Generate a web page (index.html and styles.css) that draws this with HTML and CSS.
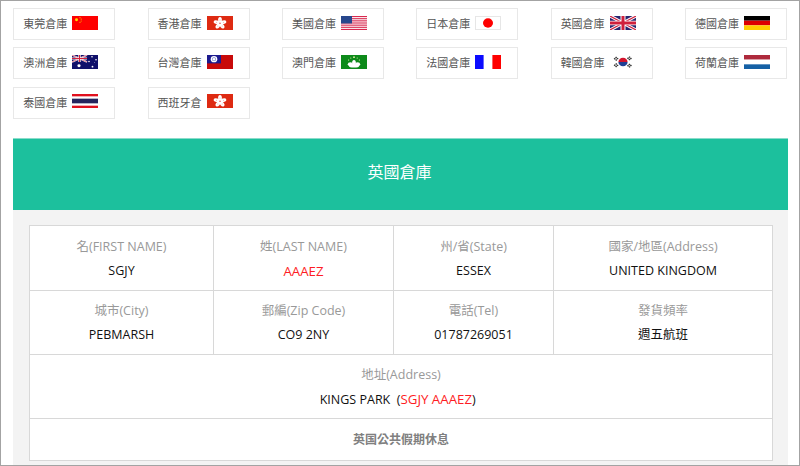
FILE: index.html
```html
<!DOCTYPE html>
<html lang="zh-Hant">
<head>
<meta charset="utf-8">
<title>英國倉庫</title>
<link rel="stylesheet" href="styles.css">
</head>
<body>
<div class="frame">
  <ul class="tiles">
    <li class="tile"><span>東莞倉庫</span>
      <svg class="flag" viewBox="0 0 26 15" preserveAspectRatio="none"><rect width="26" height="15" fill="#fe0000"/><circle cx="4.5" cy="4" r="1.5" fill="#ffde00"/><g fill="#f5b800"><circle cx="8" cy="1.8" r=".6"/><circle cx="9.2" cy="3.3" r=".6"/><circle cx="9.2" cy="5.3" r=".6"/><circle cx="8" cy="6.8" r=".6"/></g></svg></li>
    <li class="tile"><span>香港倉庫</span>
      <svg class="flag" viewBox="0 0 26 15" preserveAspectRatio="none"><rect width="26" height="15" fill="#de2a12"/><g fill="#fff"><ellipse cx="13" cy="4.4" rx="1.9" ry="3.2"/><ellipse cx="13" cy="4.4" rx="1.9" ry="3.2" transform="rotate(72 13 7.8)"/><ellipse cx="13" cy="4.4" rx="1.9" ry="3.2" transform="rotate(144 13 7.8)"/><ellipse cx="13" cy="4.4" rx="1.9" ry="3.2" transform="rotate(216 13 7.8)"/><ellipse cx="13" cy="4.4" rx="1.9" ry="3.2" transform="rotate(288 13 7.8)"/></g><g fill="#e77"><circle cx="13" cy="7.8" r=".9"/><circle cx="13" cy="4.2" r=".5"/><circle cx="16.4" cy="6.7" r=".5"/><circle cx="9.6" cy="6.7" r=".5"/><circle cx="15.1" cy="10.7" r=".5"/><circle cx="10.9" cy="10.7" r=".5"/></g></svg></li>
    <li class="tile"><span>美國倉庫</span>
      <svg class="flag" viewBox="0 0 26 15" preserveAspectRatio="none"><rect width="26" height="15" fill="#fff"/><g fill="#d8294f"><rect width="26" height="1.2"/><rect y="2.3" width="26" height="1.2"/><rect y="4.6" width="26" height="1.2"/><rect y="6.9" width="26" height="1.2"/><rect y="9.2" width="26" height="1.2"/><rect y="11.5" width="26" height="1.2"/><rect y="13.8" width="26" height="1.2"/></g><rect width="11" height="8" fill="#27478c"/></svg></li>
    <li class="tile"><span>日本倉庫</span>
      <svg class="flag" viewBox="0 0 26 15" preserveAspectRatio="none"><rect x=".5" y=".5" width="25" height="14" fill="#fff" stroke="#e6e6e6"/><circle cx="13" cy="7.5" r="5" fill="#fe0000"/></svg></li>
    <li class="tile"><span>英國倉庫</span>
      <svg class="flag" viewBox="0 0 26 15" preserveAspectRatio="none"><rect width="26" height="15" fill="#28256e"/><path d="M0 0L26 15M26 0L0 15" stroke="#fff" stroke-width="3.4"/><path d="M0 0L26 15M26 0L0 15" stroke="#d0203c" stroke-width="1.2"/><path d="M13 0V15M0 7.5H26" stroke="#fff" stroke-width="5"/><path d="M13 0V15M0 7.5H26" stroke="#d0203c" stroke-width="3"/></svg></li>
    <li class="tile"><span>德國倉庫</span>
      <svg class="flag" viewBox="0 0 26 15" preserveAspectRatio="none"><rect width="26" height="5" fill="#000"/><rect y="5" width="26" height="5" fill="#dd0000"/><rect y="10" width="26" height="5" fill="#ffce00"/></svg></li>

    <li class="tile"><span>澳洲倉庫</span>
      <svg class="flag" viewBox="0 0 26 15" preserveAspectRatio="none"><rect width="26" height="15" fill="#10106a"/><path d="M0 0L15 7.5M15 0L0 7.5" stroke="#fff" stroke-width="1.6"/><path d="M0 0L15 7.5M15 0L0 7.5" stroke="#d0203c" stroke-width=".6"/><path d="M7.5 0V7.5M0 3.75H15" stroke="#fff" stroke-width="2.4"/><path d="M7.5 0V7.5M0 3.75H15" stroke="#d0203c" stroke-width="1.2"/><g fill="#fff"><circle cx="7" cy="11.5" r="1.6"/><circle cx="20" cy="2" r=".8"/><circle cx="24" cy="5" r=".8"/><circle cx="17" cy="7" r=".8"/><circle cx="20.5" cy="12.5" r=".9"/><circle cx="22.5" cy="8" r=".4"/></g></svg></li>
    <li class="tile"><span>台灣倉庫</span>
      <svg class="flag" viewBox="0 0 26 15" preserveAspectRatio="none"><rect width="26" height="15" fill="#c80a0a"/><rect width="14" height="9" fill="#1b1a8e"/><circle cx="7" cy="4.5" r="3.3" fill="#fff"/><circle cx="7" cy="4.5" r="2" fill="#6f79c9"/><circle cx="7" cy="4.5" r="1.3" fill="#fff"/></svg></li>
    <li class="tile"><span>澳門倉庫</span>
      <svg class="flag" viewBox="0 0 26 15" preserveAspectRatio="none"><rect width="26" height="15" fill="#0d8a1a"/><g fill="#fff"><ellipse cx="13" cy="12" rx="5" ry="1.5"/><ellipse cx="13" cy="8.6" rx="1.9" ry="3.2"/><ellipse cx="9.4" cy="10" rx="2.6" ry="2.2"/><ellipse cx="16.6" cy="10" rx="2.6" ry="2.2"/></g><g fill="#eef2b0"><circle cx="13" cy="2.3" r=".9"/><circle cx="9.8" cy="3.2" r=".6"/><circle cx="16.2" cy="3.2" r=".6"/><circle cx="7.6" cy="5.4" r=".6"/><circle cx="18.4" cy="5.4" r=".6"/></g></svg></li>
    <li class="tile"><span>法國倉庫</span>
      <svg class="flag" viewBox="0 0 26 15" preserveAspectRatio="none"><rect width="8.6" height="15" fill="#0b0bff"/><rect x="17.4" width="8.6" height="15" fill="#fe0000"/></svg></li>
    <li class="tile"><span>韓國倉庫</span>
      <svg class="flag" viewBox="0 0 26 15" preserveAspectRatio="none"><rect width="26" height="15" fill="#fff"/><path d="M8.4 7.5a4.6 4.6 0 0 1 9.2 0Z" fill="#d2132c"/><path d="M8.4 7.5a4.6 4.6 0 0 0 9.2 0Z" fill="#1f3f94"/><g stroke="#333" stroke-width="1.5" stroke-dasharray="1.4 .6"><path d="M4.2 4.6L7 1.8M5.7 5.8L8.5 3"/><path d="M17.5 3L20.3 5.8M19 1.8L21.8 4.6"/><path d="M4.2 10.4L7 13.2M5.7 9.2L8.5 12"/><path d="M17.5 12L20.3 9.2M19 13.2L21.8 10.4"/></g></svg></li>
    <li class="tile"><span>荷蘭倉庫</span>
      <svg class="flag" viewBox="0 0 26 15" preserveAspectRatio="none"><rect width="26" height="5" fill="#ae2a3c"/><rect y="5" width="26" height="5" fill="#fff"/><rect y="10" width="26" height="5" fill="#1560a5"/></svg></li>

    <li class="tile"><span>泰國倉庫</span>
      <svg class="flag" viewBox="0 0 26 15" preserveAspectRatio="none"><rect width="26" height="15" fill="#fff"/><rect width="26" height="2.5" fill="#e0101e"/><rect y="5" width="26" height="5" fill="#25255e"/><rect y="12.5" width="26" height="2.5" fill="#e0101e"/></svg></li>
    <li class="tile"><span>西班牙倉</span>
      <svg class="flag" viewBox="0 0 26 15" preserveAspectRatio="none"><rect width="26" height="15" fill="#de2a12"/><g fill="#fff"><ellipse cx="13" cy="4.4" rx="1.9" ry="3.2"/><ellipse cx="13" cy="4.4" rx="1.9" ry="3.2" transform="rotate(72 13 7.8)"/><ellipse cx="13" cy="4.4" rx="1.9" ry="3.2" transform="rotate(144 13 7.8)"/><ellipse cx="13" cy="4.4" rx="1.9" ry="3.2" transform="rotate(216 13 7.8)"/><ellipse cx="13" cy="4.4" rx="1.9" ry="3.2" transform="rotate(288 13 7.8)"/></g><g fill="#e77"><circle cx="13" cy="7.8" r=".9"/><circle cx="13" cy="4.2" r=".5"/><circle cx="16.4" cy="6.7" r=".5"/><circle cx="9.6" cy="6.7" r=".5"/><circle cx="15.1" cy="10.7" r=".5"/><circle cx="10.9" cy="10.7" r=".5"/></g></svg></li>
  </ul>

  <h2 class="banner">英國倉庫</h2>

  <div class="panel">
    <table class="info">
      <colgroup><col class="c1"><col class="c2"><col class="c3"><col class="c4"></colgroup>
      <tr class="row-first">
        <td class="cell"><div class="label">名(FIRST NAME)</div><div class="value">SGJY</div></td>
        <td class="cell"><div class="label">姓(LAST NAME)</div><div class="value red">AAAEZ</div></td>
        <td class="cell"><div class="label">州/省(State)</div><div class="value">ESSEX</div></td>
        <td class="cell"><div class="label">國家/地區(Address)</div><div class="value">UNITED KINGDOM</div></td>
      </tr>
      <tr class="row">
        <td class="cell"><div class="label">城市(City)</div><div class="value">PEBMARSH</div></td>
        <td class="cell"><div class="label">郵編(Zip Code)</div><div class="value">CO9 2NY</div></td>
        <td class="cell"><div class="label">電話(Tel)</div><div class="value">01787269051</div></td>
        <td class="cell"><div class="label">發貨頻率</div><div class="value">週五航班</div></td>
      </tr>
      <tr class="row">
        <td class="cell" colspan="4"><div class="label">地址(Address)</div><div class="value">KINGS PARK &nbsp;(<span class="red">SGJY AAAEZ</span>)&nbsp;&nbsp;</div></td>
      </tr>
      <tr class="row-note">
        <td colspan="4" class="note">英国公共假期休息</td>
      </tr>
    </table>
  </div>
</div>
</body>
</html>
```
FILE: styles.css
```css
* { box-sizing: border-box; }
html, body { margin: 0; padding: 0; background: #fff; }
body { font-family: "Open Sans", "Noto Sans CJK TC", sans-serif; }

.frame {
  width: 800px;
  height: 466px;
  border: 1px solid #a3a3a3;
  padding: 7px 11px 0 12px;
  display: flex;
  flex-direction: column;
  overflow: hidden;
}

.tiles {
  list-style: none;
  margin: 0 1px 19.2px 0.2px;
  padding: 0;
  display: grid;
  grid-template-columns: repeat(6, 102px);
  justify-content: space-between;
  grid-auto-rows: 32px;
  row-gap: 7.4px;
}

.tile {
  border: 1px solid #e8e8e8;
  display: flex;
  align-items: center;
  gap: 5px;
  padding: 0 0 2px 9px;
  font-size: 11px;
  color: #555;
}

.flag { width: 26px; height: 14px; margin-bottom: 1px; flex: none; display: block; }

.banner {
  margin: 0;
  height: 72px;
  padding: 0 2px 7px 0;
  display: flex;
  align-items: center;
  justify-content: center;
  background: #1cc09d;
  border-top: 1px solid #8adcca;
  color: #fff;
  font-size: 16px;
  font-weight: 400;
}

.panel {
  flex: 1;
  background: #f3f3f3;
  padding: 15px 16px 0;
}

.info {
  width: 743px;
  border-collapse: collapse;
  table-layout: fixed;
  background: #fff;
  text-align: center;
}
.c1 { width: 184px; }
.c2 { width: 180px; }
.c3 { width: 160px; }
.c4 { width: 219px; }

.info td { border: 1px solid #d8d8d8; padding: 0; }
.info .cell { padding-top: 2px; }
.row-first { height: 65px; }
.row { height: 64px; }
.row-note { height: 42px; }

.label { font-size: 12.5px; line-height: 24px; color: #999; }
.value { font-size: 12.5px; line-height: 24px; color: #111; }
.red { color: #fe1c24; font-size: 13.3px; }
.note { font-size: 12px; font-weight: 700; color: #808080; }
```
